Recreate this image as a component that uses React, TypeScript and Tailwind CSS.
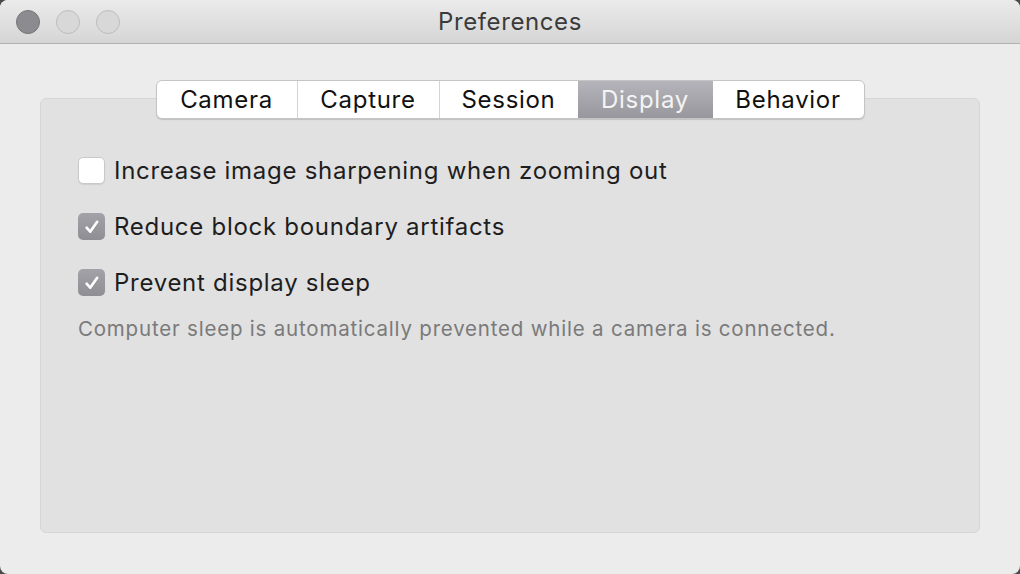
import React, { useState } from 'react';

const tabs = ['Camera', 'Capture', 'Session', 'Display', 'Behavior'];
const tabWidths = ['w-[140px]', 'w-[142px]', 'w-[139px]', 'w-[135px]', 'w-[151px]'];

const Checkbox = ({ checked }: { checked: boolean }) =>
  checked ? (
    <div className="w-[27px] h-[27px] rounded-[5px] bg-gradient-to-b from-[#a3a2a8] to-[#8f8e94] flex items-center justify-center shrink-0">
      <svg width="18" height="18" viewBox="0 0 16 16" fill="none">
        <path d="M3.2 8.6 L6.4 12.2 L12.6 3.4" stroke="#fff" strokeWidth="2.3" strokeLinecap="round" strokeLinejoin="round" />
      </svg>
    </div>
  ) : (
    <div className="w-[27px] h-[27px] rounded-[5px] bg-white border border-[#c9c9c9] shadow-[0_1px_1px_rgba(0,0,0,0.08)] shrink-0" />
  );

export default function App() {
  const [active, setActive] = useState(3);
  const [opts, setOpts] = useState([false, true, true]);
  const labels = [
    'Increase image sharpening when zooming out',
    'Reduce block boundary artifacts',
    'Prevent display sleep',
  ];

  return (
    <div className="w-[1020px] h-[574px] bg-[#4a4a4a]" style={{ fontFamily: 'Inter, "Liberation Sans", sans-serif' }}>
      <div className="w-full h-full rounded-[8px] bg-[#ececec] overflow-hidden flex flex-col">
        {/* title bar */}
        <div className="h-[44px] shrink-0 bg-gradient-to-b from-[#ebebeb] to-[#d5d5d5] border-b border-[#b1b1b1] flex items-center px-[16px] relative">
          <div className="flex gap-[16px]">
            <div className="w-[24px] h-[24px] rounded-full bg-[#8c8b90] border border-[#76757a]" />
            <div className="w-[24px] h-[24px] rounded-full bg-[#d8d8d8] border border-[#bdbdbd]" />
            <div className="w-[24px] h-[24px] rounded-full bg-[#d8d8d8] border border-[#bdbdbd]" />
          </div>
          <div className="absolute left-0 right-0 top-[8px] text-center text-[24px] leading-[28px] tracking-[0.6px] text-[#3b3b3b] pointer-events-none">
            Preferences
          </div>
        </div>

        {/* body */}
        <div className="flex-1 px-[40px] pt-[36px] pb-[41px] flex flex-col relative">
          <div className="flex-1 mt-[18px] rounded-[6px] bg-[#e1e1e1] border border-[#d6d6d6] px-[37px] pt-[58px]">
            <div className="flex flex-col gap-[29px]">
              {labels.map((l, i) => (
                <label
                  key={l}
                  className="flex items-center gap-[9px] cursor-default"
                  onClick={() => setOpts(opts.map((o, j) => (j === i ? !o : o)))}
                >
                  <Checkbox checked={opts[i]} />
                  <span className="text-[24px] leading-[27px] tracking-[0.72px] text-[#1e1e1e]">{l}</span>
                </label>
              ))}
            </div>
            <p className="mt-[18px] text-[20.5px] tracking-[0.8px] text-[#7a7a7a]">
              Computer sleep is automatically prevented while a camera is connected.
            </p>
          </div>

          {/* segmented tabs overlapping group box */}
          <div className="absolute top-[36px] left-0 right-0 flex justify-center">
            <div className="flex h-[39px] rounded-[6px] bg-white border border-[#c5c5c5] shadow-[0_1px_1px_rgba(0,0,0,0.15)] overflow-hidden">
              {tabs.map((t, i) => (
                <button
                  key={t}
                  onClick={() => setActive(i)}
                  className={`${tabWidths[i]} h-full flex items-center justify-center text-[24px] tracking-[0.7px] ${
                    i > 0 && i !== active && i - 1 !== active ? 'border-l border-[#d4d4d4]' : ''
                  } ${
                    i === active
                      ? 'bg-gradient-to-b from-[#b5b4ba] to-[#98979d] text-[#f4f4f4]'
                      : 'text-[#111]'
                  }`}
                >
                  {t}
                </button>
              ))}
            </div>
          </div>
        </div>
      </div>
    </div>
  );
}
